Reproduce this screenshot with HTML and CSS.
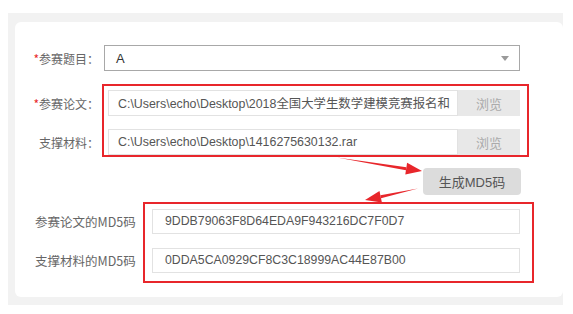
FILE: index.html
```html
<!DOCTYPE html>
<html lang="zh">
<head>
<meta charset="utf-8">
<title>MD5</title>
<link rel="stylesheet" href="styles.css">
</head>
<body>
<div class="frame">
  <div class="card">
    <div class="row r1">
      <label class="lbl"><span class="req">*</span>参赛题目：</label>
      <div class="select">
        <span class="sel-text">A</span>
        <span class="caret"></span>
      </div>
    </div>
    <div class="row r2">
      <label class="lbl"><span class="req">*</span>参赛论文：</label>
      <div class="file">
        <div class="file-input"><span class="ftext">C:\Users\echo\Desktop\2018全国大学生数学建模竞赛报名和</span></div>
        <div class="browse">浏览</div>
      </div>
    </div>
    <div class="row r3">
      <label class="lbl">支撑材料：</label>
      <div class="file">
        <div class="file-input"><span class="ftext">C:\Users\echo\Desktop\1416275630132.rar</span></div>
        <div class="browse">浏览</div>
      </div>
    </div>
    <div class="row r-btn">
      <button class="gen">生成MD5码</button>
    </div>
    <div class="row r4">
      <label class="lbl2">参赛论文的MD5码</label>
      <div class="md5">9DDB79063F8D64EDA9F943216DC7F0D7</div>
    </div>
    <div class="row r5">
      <label class="lbl2">支撑材料的MD5码</label>
      <div class="md5">0DDA5CA0929CF8C3C18999AC44E87B00</div>
    </div>
  </div>
</div>
<svg class="annot" width="573" height="314" viewBox="0 0 573 314">
  <rect x="103" y="85" width="425" height="71" fill="none" stroke="#e8262b" stroke-width="2"/>
  <rect x="144" y="203" width="389" height="79" fill="none" stroke="#e8262b" stroke-width="2"/>
  <polygon points="337,157.6 406.4,167.2 405.9,170.2" fill="#e8262b"/>
  <polygon points="422,171 405.3,174.5 407.1,162.7" fill="#e8262b"/>
  <polygon points="418,188.6 380.4,195.2 381,198.2" fill="#e8262b"/>
  <polygon points="365,200 379.5,190.9 381.9,202.6" fill="#e8262b"/>
</svg>
</body>
</html>
```
FILE: styles.css
```css
html, body {
  margin: 0;
  padding: 0;
  background: #ffffff;
}
body {
  position: relative;
  width: 573px;
  height: 314px;
  overflow: hidden;
  font-family: "Liberation Sans", "Noto Sans CJK SC", sans-serif;
}
.frame {
  margin: 13px 10px 9px 8px;
  background: #f2f2f2;
  padding: 9px 0 8px 7px;
}
.card {
  background: #ffffff;
  border-radius: 6px;
  height: 275px;
  box-sizing: border-box;
  padding-top: 23px;
  display: flex;
  flex-direction: column;
}
.row {
  display: flex;
  align-items: center;
}
.r1 { height: 26px; }
.r2 { height: 26px; margin-top: 19px; }
.r3 { height: 26px; margin-top: 13px; }
.r-btn { height: 27px; margin-top: 13px; justify-content: flex-end; padding-right: 42px; }
.r4 { height: 25px; margin-top: 14px; }
.r5 { height: 25px; margin-top: 14px; }

.lbl {
  width: 84px;
  text-align: right;
  font-family: "Noto Sans CJK SC", sans-serif;
  font-size: 12px;
  color: #666666;
  flex: none;
}
.req {
  color: #e8262b;
}
.lbl2 {
  width: 117px;
  padding-left: 20px;
  font-family: "Noto Sans CJK SC", sans-serif;
  font-size: 12.5px;
  color: #666666;
  flex: none;
  white-space: nowrap;
}
.select {
  margin-left: 5px;
  width: 416px;
  height: 26px;
  box-sizing: border-box;
  border: 1px solid #a8a8a8;
  display: flex;
  align-items: center;
  padding: 0 10px 0 11px;
}
.sel-text {
  flex: 1;
  font-size: 13px;
  color: #333333;
}
.caret {
  width: 0;
  height: 0;
  border-left: 4px solid transparent;
  border-right: 4px solid transparent;
  border-top: 5px solid #9a9a9a;
}
.file {
  margin-left: 9px;
  width: 412px;
  height: 26px;
  display: flex;
}
.file-input {
  width: 350px;
  flex: none;
  box-sizing: border-box;
  border: 1px solid #e2e2e2;
  padding-left: 9px;
  overflow: hidden;
  display: flex;
  align-items: center;
}
.ftext {
  font-size: 12.4px;
  color: #555555;
  white-space: nowrap;
}
.browse {
  width: 62px;
  flex: none;
  background: #e8e8e8;
  color: #ababab;
  font-family: "Noto Sans CJK SC", sans-serif;
  font-size: 13px;
  display: flex;
  align-items: center;
  justify-content: center;
}
.gen {
  width: 98px;
  height: 27px;
  border: none;
  border-radius: 4px;
  background: #dcdcdc;
  color: #555555;
  font-family: "Liberation Sans", "Noto Sans CJK SC", sans-serif;
  font-size: 13px;
  padding: 0;
}
.md5 {
  width: 368px;
  height: 25px;
  box-sizing: border-box;
  border: 1px solid #e2e2e2;
  padding: 0 12px;
  font-size: 12.3px;
  line-height: 23px;
  color: #555555;
  white-space: nowrap;
  overflow: hidden;
}
.annot {
  position: absolute;
  left: 0;
  top: 0;
  pointer-events: none;
}
```
